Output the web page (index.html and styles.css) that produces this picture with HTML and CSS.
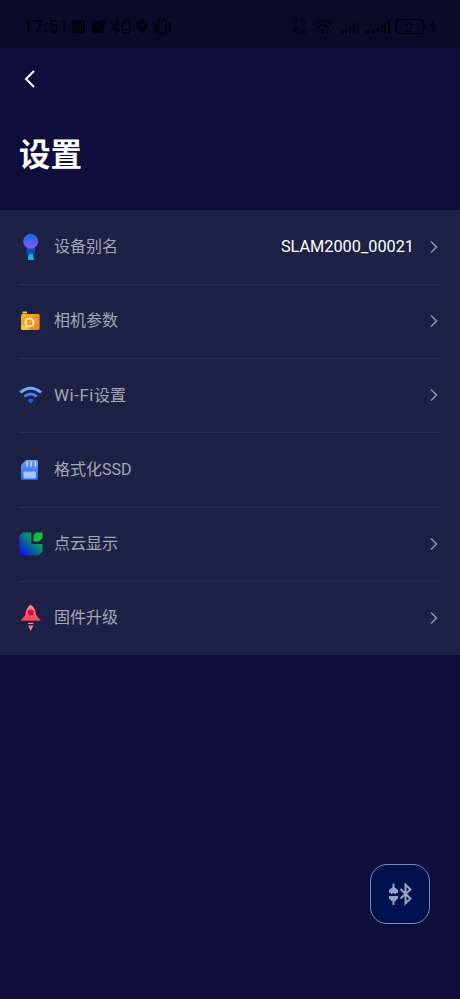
FILE: index.html
```html
<!DOCTYPE html>
<html lang="zh-CN">
<head>
<meta charset="utf-8">
<title>设置</title>
<link rel="stylesheet" href="styles.css">
</head>
<body>
<div class="statusbar">
  <span class="clock">17:51</span>
  <svg class="status-left" width="102" height="18" viewBox="72 18 102 18" fill="none" stroke="currentColor" stroke-width="1.4">
    <rect x="72" y="20" width="13" height="13" rx="3" fill="currentColor" stroke="none"/>
    <path d="M75.500 33V22l7 9V20.500" stroke="#0a0a2a" stroke-width="1.100"/>
    <circle cx="98.200" cy="27" r="6.200" fill="currentColor" stroke="none"/>
    <path d="M91 23l3-3M105.400 23l-3-3M94 31.500l-1.500 2M102.500 31.500l1.500 2"/>
    <path d="M98 23.500v4l2.500 2.500" stroke="#0a0a2a"/>
    <path d="M111.500 23l7.500 7.500-3 3V20.500l3 3-7.500 7.500"/>
    <rect x="122.500" y="22" width="7.500" height="11.300" rx="2"/><path d="M124 19.800h4.500M125 30h2.800" stroke-width="2"/>
    <path d="M142.300 33.500c-2.500-3-5.300-5.500-5.300-8.500a5.300 5.300 0 0 1 10.600 0c0 3-2.800 5.500-5.300 8.500z" fill="currentColor" stroke="none"/>
    <circle cx="142.300" cy="25" r="1.700" fill="#0a0a2a" stroke="none"/>
    <rect x="158.500" y="20" width="7.500" height="13.300" rx="1.800" stroke-width="1.800"/>
    <path d="M154 22l1.500 2-1.500 2 1.500 2-1.500 2 1.500 2M170.300 22l-1.500 2 1.500 2-1.500 2 1.500 2-1.500 2"/>
  </svg>
  <span class="speed"><span>7.9</span><span>K/s</span></span>
  <svg class="status-right" width="126" height="18" viewBox="313 18 126 18" fill="none" stroke="currentColor">
    <path d="M314.500 24.500q8.500-8 17 0M317.500 27.500q5.500-5 11 0" stroke-width="1.800"/>
    <circle cx="323" cy="31.500" r="2" fill="currentColor" stroke="none"/><path d="M327.500 30.500v3M330.500 30.500v3"/>
    <path d="M342 30.500v3M346 29v4.500M350 26v7.500M354 23v10.500" stroke-width="1.900"/><path d="M358 20v13.500" opacity=".3"/>
    <path d="M366.500 30v3.500M369 31v2.500M373.500 29.500v4M377.500 28v5.500M381.500 25.500v8M385 23v10.500M389 19.500v14" stroke-width="1.900"/>
    <rect x="396.500" y="19.500" width="26.500" height="14" rx="3.500" stroke-width="1.200"/><path d="M425.500 24.500v4" stroke-width="1.500"/>
    <path d="M433 19.500l-3.500 7h2.500v4l3-6h-2zM435 27l-2 4h1.500v3l2-4.500H435z" fill="currentColor" stroke="none"/>
    <text class="charge" x="409.500" y="31.500" text-anchor="middle">2</text>
  </svg>
</div>
<header>
  <svg class="back" width="14" height="20" viewBox="0 0 14 20"><path d="M11 2L3 10l8 8"/></svg>
  <h1>设置</h1>
</header>
<main class="settings">
  <div class="row">
    <svg class="icon" width="24" height="28" viewBox="0 0 24 28">
      <defs><linearGradient id="ball" x2="0" y2="1"><stop stop-color="#176bdc"/><stop offset="1" stop-color="#8856f0"/></linearGradient></defs>
      <path d="M7.500 13h8.500v8H7.500z" fill="#0751bd"/><path d="M9.500 21H14l1 6H9z" fill="#09b5f4"/><circle cx="11.700" cy="8.300" r="7.500" fill="url(#ball)"/>
    </svg>
    <span class="label">设备别名</span><span class="value">SLAM2000_00021</span>
    <svg class="chevron" width="8" height="14" viewBox="0 0 8 14"><path d="M1 1.500L6.500 7 1 12.500"/></svg>
  </div>
  <div class="row">
    <svg class="icon" width="24" height="28" viewBox="0 0 24 28">
      <defs><linearGradient id="camera" x2="1" y2="1"><stop stop-color="#f7b51c"/><stop offset="1" stop-color="#ef8025"/></linearGradient></defs>
      <path d="M3.500 4.500H8v2H3.500z" fill="#f4ce64"/><rect x="2" y="7" width="18.600" height="16" rx="1.500" fill="url(#camera)"/><path d="M2 17.500l6 1.500 3 4H3.500L2 21.500z" fill="#fcc044"/><circle cx="10.500" cy="15.500" r="4" fill="none" stroke="#fff4d3" stroke-width="1.700"/><circle cx="17.500" cy="10" r="1" fill="#f06c25"/>
    </svg>
    <span class="label">相机参数</span>
    <svg class="chevron" width="8" height="14" viewBox="0 0 8 14"><path d="M1 1.500L6.500 7 1 12.500"/></svg>
  </div>
  <div class="row">
    <svg class="icon" width="24" height="28" viewBox="0 0 24 28" fill="none">
      <path d="M1.300 11.500q10.400-8.500 20.800 0" stroke="#76a6fb" stroke-width="2.900"/><path d="M5.500 15.500q6.200-5 12.400 0" stroke="#4583f6" stroke-width="2.800"/><path d="M8.500 19q3.200-2.700 6.400 0l-3.200 3.700z" fill="#1261f4"/>
    </svg>
    <span class="label"><span class="latin-wide">Wi-Fi</span>设置</span>
    <svg class="chevron" width="8" height="14" viewBox="0 0 8 14"><path d="M1 1.500L6.500 7 1 12.500"/></svg>
  </div>
  <div class="row">
    <svg class="icon" width="24" height="28" viewBox="0 0 24 28">
      <defs><linearGradient id="card" x2="0" y2="1"><stop stop-color="#6ca0fa"/><stop offset="1" stop-color="#2060ed"/></linearGradient></defs>
      <path d="M7 4h10.500q1.500 0 1.500 1.500v17q0 1.500-1.500 1.500h-15Q2 24 2 22.500V9z" fill="url(#card)"/><path d="M8 5.500v5M12.200 5.500v5M16.400 5.500v5" stroke="#e3dfb3" stroke-width="1.400"/><rect x="4.500" y="15.500" width="12.500" height="7" rx=".8" fill="#a4c2fb"/>
    </svg>
    <span class="label">格式化SSD</span>
  </div>
  <div class="row">
    <svg class="icon" width="24" height="28" viewBox="0 0 24 28">
      <defs><linearGradient id="cloud" gradientUnits="userSpaceOnUse" x1="2" y1="24" x2="22" y2="4"><stop stop-color="#0612f4"/><stop offset=".6" stop-color="#088b70"/><stop offset="1" stop-color="#06d52d"/></linearGradient></defs>
      <path d="M3.500 2.500h8.800V14h11.200v7.500l-4 4H.500V6z" fill="url(#cloud)"/><path d="M17 2.500h6.500V8L20 11.500h-5.500V5z" fill="#0bc438"/>
    </svg>
    <span class="label">点云显示</span>
    <svg class="chevron" width="8" height="14" viewBox="0 0 8 14"><path d="M1 1.500L6.500 7 1 12.500"/></svg>
  </div>
  <div class="row">
    <svg class="icon" width="24" height="28" viewBox="0 0 24 28">
      <defs><linearGradient id="rocket" x2="0" y2="1"><stop stop-color="#ff8aa0"/><stop offset="1" stop-color="#ff3855"/></linearGradient></defs>
      <path d="M11.700.800C8 3 6.500 7.500 6.500 11L1.500 16.800h20.400L17 11c0-3.500-1.500-8-5.300-10.200z" fill="url(#rocket)"/><circle cx="11.700" cy="8.500" r="3" fill="#db102f"/><path d="M9 18.800h5.500v1.300H9zM9 21.500h5.500L11.700 27z" fill="#ff7892"/>
    </svg>
    <span class="label">固件升级</span>
    <svg class="chevron" width="8" height="14" viewBox="0 0 8 14"><path d="M1 1.500L6.500 7 1 12.500"/></svg>
  </div>
</main>
<button class="connect" aria-label="蓝牙连接">
  <svg width="26" height="24" viewBox="0 0 26 24">
    <path d="M6.500 1.500v4M6.500 18v5M13.500 7l10 9.500-5 4.800V2.700l5 4.800-10 9" fill="none" stroke="currentColor" stroke-width="2"/>
    <path d="M6.500 4.500l4.500 3.500v3H9v1H7.500v-1h-2v1H4v-1H2V8zM2 14h9v2.500L8.500 19h-4L2 16.500z" fill="currentColor"/>
  </svg>
</button>
</body>
</html>
```
FILE: styles.css
```css
* { box-sizing: border-box; }
body {
  margin: 0;
  height: 999px;
  display: flex;
  flex-direction: column;
  background: #0e0e3c;
  color: #fff;
  font-family: Roboto, "Noto Sans CJK SC", sans-serif;
}
svg { display: block; flex: none; }
.statusbar {
  height: 48px;
  flex: none;
  display: flex;
  align-items: flex-start;
  padding: 18px 21px 0 23px;
  background: #0a0a2a;
  color: #01010b;
}
.clock { width: 49px; font-size: 18px; line-height: 18px; letter-spacing: .2px; }
.speed { margin-left: auto; width: 20px; display: grid; grid-template-rows: 9px 9px; font-size: 9px; line-height: 9px; }
.charge { font-size: 13px; fill: currentColor; stroke: none; }
header { height: 162px; flex: none; padding: 21px 19px 0; }
.back { margin-left: 4px; fill: none; stroke: #fff; stroke-width: 2; }
h1 { margin: 45px 0 0; font-size: 31.5px; line-height: 44px; font-weight: 700; }
.settings {
  height: 445px;
  flex: none;
  display: grid;
  grid-template-rows: repeat(6, 1fr);
  padding: 0 19px;
  background: #1e2146;
}
.row { display: flex; align-items: center; padding-bottom: 1px; }
.row + .row { border-top: 1px solid #2c2e51; }
.icon { margin-right: 11px; }
.label { font-size: 16px; line-height: 24px; color: #a5a6b5; }
.latin-wide { font-size: 17px; letter-spacing: .5px; }
.value { margin-left: auto; margin-right: 16px; font-size: 16.3px; line-height: 24px; }
.chevron { margin-left: auto; margin-right: 3px; fill: none; stroke: #9495a4; stroke-width: 1.500; }
.value + .chevron { margin-left: 0; }
.connect {
  width: 60px;
  height: 60px;
  margin: auto 30px 75px auto;
  padding: 0;
  display: grid;
  place-items: center;
  border: 1px solid #8288a7;
  border-radius: 17px;
  background: #001150;
  color: #98a1bf;
}
```
